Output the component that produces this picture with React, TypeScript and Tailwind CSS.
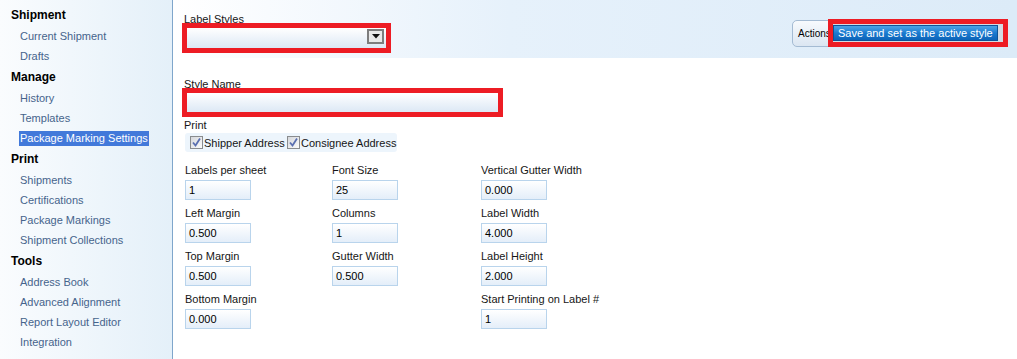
import React from "react";

const navGroups: { title: string; items: string[] }[] = [
  { title: "Shipment", items: ["Current Shipment", "Drafts"] },
  { title: "Manage", items: ["History", "Templates", "Package Marking Settings"] },
  { title: "Print", items: ["Shipments", "Certifications", "Package Markings", "Shipment Collections"] },
  { title: "Tools", items: ["Address Book", "Advanced Alignment", "Report Layout Editor", "Integration"] },
];

const fields: { label: string; value: string }[][] = [
  [
    { label: "Labels per sheet", value: "1" },
    { label: "Font Size", value: "25" },
    { label: "Vertical Gutter Width", value: "0.000" },
  ],
  [
    { label: "Left Margin", value: "0.500" },
    { label: "Columns", value: "1" },
    { label: "Label Width", value: "4.000" },
  ],
  [
    { label: "Top Margin", value: "0.500" },
    { label: "Gutter Width", value: "0.500" },
    { label: "Label Height", value: "2.000" },
  ],
  [
    { label: "Bottom Margin", value: "0.000" },
    { label: "", value: "" },
    { label: "Start Printing on Label #", value: "1" },
  ],
];

function Check() {
  return (
    <div className="w-[13px] h-[13px] border border-[#8a8c8e] bg-linear-to-br from-[#d6d8dc] to-[#fbfbfb] flex items-center justify-center">
      <svg width="11" height="11" viewBox="0 0 11 11">
        <polyline points="2,5.5 4.5,8.5 9,1.5" fill="none" stroke="#5a6fb0" strokeWidth="1.8" />
      </svg>
    </div>
  );
}

export default function App() {
  return (
    <div className="w-[1017px] h-[359px] flex overflow-hidden bg-white font-[Liberation_Sans,Arial,sans-serif] text-[11px] text-[#161616]">
      {/* Sidebar */}
      <div className="w-[173px] shrink-0 h-full border-r border-[#7fa6cb] bg-linear-to-r from-[#fafcfe] to-[#e4f0f9] pt-[4px]">
        {navGroups.map((g) => (
          <div key={g.title}>
            <div className="h-[22px] flex items-center pl-[11px] font-bold text-[12px] text-black">{g.title}</div>
            {g.items.map((it) => (
              <div key={it} className="h-[20px] flex items-center pl-[19px] text-[#46648c]">
                {it === "Package Marking Settings" ? (
                  <span className="h-[15px] leading-[15px] px-[1px] bg-[#4279da] text-white">{it}</span>
                ) : (
                  <span className="pl-[1px]">{it}</span>
                )}
              </div>
            ))}
          </div>
        ))}
      </div>

      {/* Main */}
      <div className="flex-1 flex flex-col">
        {/* Header */}
        <div className="h-[58px] flex justify-between bg-linear-to-r from-white via-[#e6f1fb] via-40% to-[#dcebf8]">
          <div className="pl-[11px] pt-[13px]">
            <div className="h-[13px] leading-[13px]">Label Styles</div>
            <div className="relative ml-[-2px] mt-[-3px] w-[209px] h-[30px] border-[5px] border-[#ed1c24]">
              <div className="w-full h-full bg-linear-to-b from-white to-[#dce8f5] flex justify-end items-start pt-[1px] pr-[2px]">
                <div className="w-[17px] h-[15px] border-2 border-[#7d7d7d] bg-[#e9e9e9] flex items-center justify-center">
                  <svg width="8" height="5" viewBox="0 0 8 5">
                    <polygon points="0,0 8,0 4,4.5" fill="#111" />
                  </svg>
                </div>
              </div>
            </div>
          </div>
          <div className="pt-[19px] pr-[9px] flex items-start">
            <div className="mt-[1px] w-[38px] h-[27px] rounded-l-[5px] border border-[#a4bbd3] bg-linear-to-b from-[#f7fafd] to-[#dbe6f2] pl-[5px] flex items-center text-[10px] text-black overflow-hidden">
              Actions
            </div>
            <div className="relative ml-[-2px] h-[28px] border-[5px] border-[#ed1c24] bg-[#d3dbe4] flex items-center pr-[5px]">
              <div className="w-[165px] h-[16px] bg-linear-to-b from-[#4aa3e6] via-[#1a7bd0] to-[#0c63b8] border border-[#0d5296] text-white leading-[14px] pl-[4px] text-[11px]">
                Save and set as the active style
              </div>
            </div>
          </div>
        </div>

        {/* Body */}
        <div className="pl-[11px] pt-[20px]">
          <div className="h-[13px] leading-[13px]">Style Name</div>
          <div className="relative ml-[-2px] mt-[-3px] w-[321px] h-[29px] border-[5px] border-[#ed1c24]">
            <div className="w-full h-full bg-linear-to-b from-white to-[#dce8f5]" />
          </div>
          <div className="mt-[2px] h-[13px] leading-[13px]">Print</div>
          <div className="ml-[1px] mt-[1px] w-[212px] h-[19px] rounded-[3px] bg-[#edf5fc] flex items-center pl-[5px]">
            <div className="w-[97px] flex items-center">
              <Check />
              <span className="ml-[1px] leading-[13px] pt-[2px]">Shipper Address</span>
            </div>
            <div className="flex items-center">
              <Check />
              <span className="ml-[1px] leading-[13px] pt-[2px]">Consignee Address</span>
            </div>
          </div>

          <div className="ml-[1px] mt-[12px] flex flex-col gap-[7px]">
            {fields.map((row, ri) => (
              <div key={ri} className="grid grid-cols-[147px_149px_auto]">
                {row.map((f, ci) => (
                  <div key={ci} className="flex flex-col gap-[3px]">
                    {f.label ? (
                      <>
                        <div className="h-[13px] leading-[13px]">{f.label}</div>
                        <div className="w-[66px] h-[20px] border border-[#b9d4ec] bg-linear-to-b from-white to-[#e4eef9] pl-[3px] leading-[18px] text-black">
                          {f.value}
                        </div>
                      </>
                    ) : null}
                  </div>
                ))}
              </div>
            ))}
          </div>
        </div>
      </div>
    </div>
  );
}
